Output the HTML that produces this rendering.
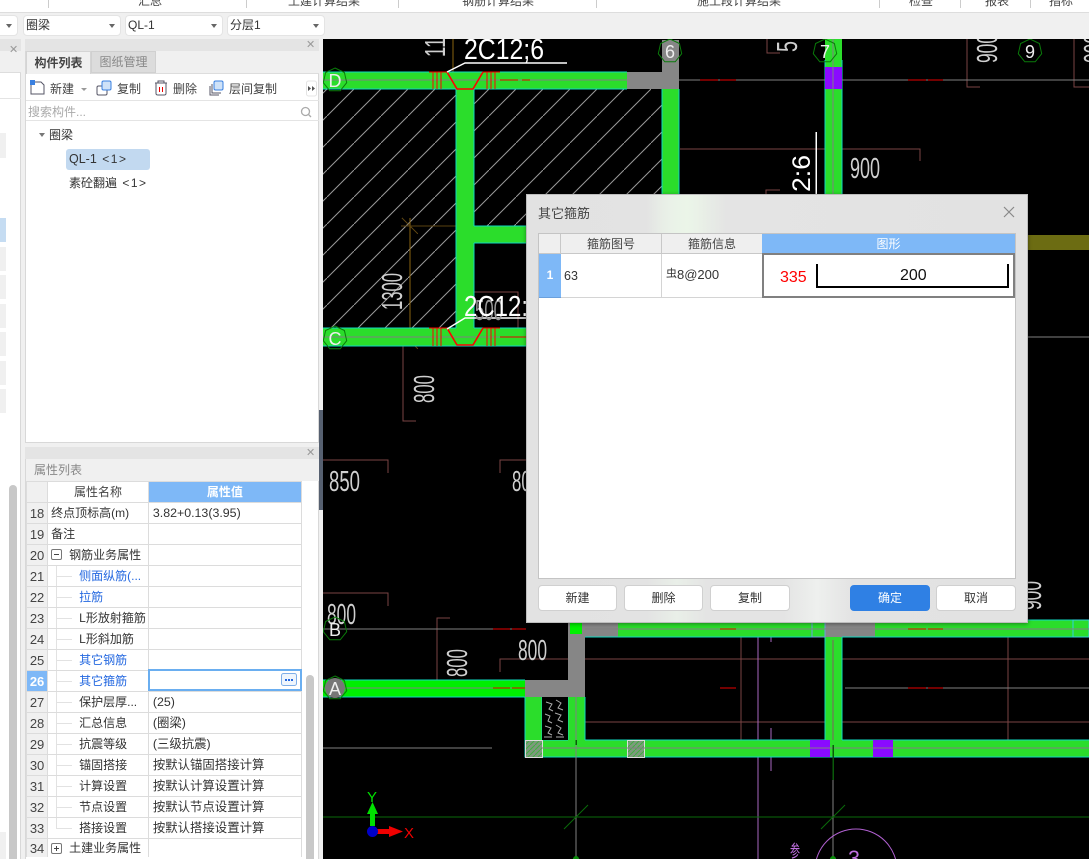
<!DOCTYPE html>
<html style="overflow:hidden;width:1089px;height:859px"><head><meta charset="utf-8"><style>
html,body{margin:0;padding:0}
body{width:1089px;height:859px;overflow:hidden;position:relative;background:#f0f0f0;font:12px/1 "Liberation Sans","Noto Sans CJK SC",sans-serif;color:#333}
.a{position:absolute}
.sel{position:absolute;top:15px;height:21px;background:#fff;border-radius:4px;border:1px solid #e4e4e4;box-sizing:border-box;line-height:19px;padding-left:2px;font-size:12px}
.sel:after{content:"";position:absolute;right:5px;top:8px;border:3px solid transparent;border-top:4px solid #666}
.top{position:absolute;top:-5px;font-size:12px;line-height:12px;white-space:nowrap;color:#444}
.sep{position:absolute;top:0;height:8px;width:1px;background:#ccc}
table{border-collapse:collapse;table-layout:fixed;position:absolute}
#pw{position:absolute;left:26px;top:481px;width:277px;height:378px;overflow:hidden}
#pt{left:0;top:0;width:276px}
#pt td{height:20px;padding:0;border:1px solid #dcdcdc;position:relative;white-space:nowrap;overflow:hidden;background:#fff;box-sizing:content-box;color:#333}
#pt tr.last td{height:18px;border-bottom:0}
#pt td:first-child{background:#f0f0f0;text-align:center;font-size:13px;color:#444}
#pt td.n{padding-left:3px}
#pt td.c{padding-left:31px;}
#pt td.v{padding-left:4px;font-size:12.4px}
#pt .b{color:#2468e0}
#pt i{position:absolute;left:8px;top:0;bottom:0;width:1px;background:#e2e2e2}
#pt i:after{content:"";position:absolute;left:0;top:10px;width:16px;height:1px;background:#e2e2e2}
.box{position:absolute;left:3px;top:4px;width:11px;height:11px;border:1px solid #777;border-radius:2px;box-sizing:border-box;background:#fff}
.box:before{content:"";position:absolute;left:2px;top:4px;width:5px;height:1px;background:#444}
.box.p:after{content:"";position:absolute;left:4px;top:2px;width:1px;height:5px;background:#444}
.btn{position:absolute;top:585px;height:26px;background:#fff;border:1px solid #d0d0d0;border-radius:4px;box-sizing:border-box;text-align:center;line-height:25px;font-size:12px;color:#333}
.tb{position:absolute;top:82px;font-size:12px;line-height:14px;color:#444;white-space:nowrap}
</style></head><body>

<!-- top strip -->
<div class="a" style="left:0;top:0;width:1089px;height:13px;box-sizing:border-box;background:#fff;border-bottom:1px solid #ddd;overflow:hidden">
<div class="sep" style="left:48px"></div><div class="sep" style="left:246px"></div><div class="sep" style="left:398px"></div><div class="sep" style="left:596px"></div><div class="sep" style="left:879px"></div><div class="sep" style="left:960px"></div><div class="sep" style="left:1030px"></div>
<span class="top" style="left:138px">汇总</span><span class="top" style="left:288px">土建计算结果</span><span class="top" style="left:462px">钢筋计算结果</span><span class="top" style="left:697px">施工段计算结果</span><span class="top" style="left:909px">检查</span><span class="top" style="left:985px">报表</span><span class="top" style="left:1049px">指标</span>
</div>
<div class="sel" style="left:-10px;width:28px"></div>
<div class="sel" style="left:23px;width:98px">圈梁</div>
<div class="sel" style="left:125px;width:98px">QL-1</div>
<div class="sel" style="left:227px;width:98px">分层1</div>

<!-- CAD -->
<svg class="a" style="left:323px;top:39px;display:block" width="766" height="820" viewBox="323 39 766 820" shape-rendering="crispEdges" xmlns="http://www.w3.org/2000/svg">
<defs>
<pattern id="h" width="27" height="27" patternUnits="userSpaceOnUse" x="3" y="8"><path d="M-1 28L28-1" stroke="#9a9a9a" stroke-width="1" shape-rendering="geometricPrecision"/></pattern>
<pattern id="g" width="5" height="5" patternUnits="userSpaceOnUse"><rect width="5" height="5" fill="#7d9a7d"/><path d="M0 5L5 0" stroke="#3fae3f" shape-rendering="geometricPrecision"/></pattern>
<polygon id="hx" points="0,-12 9.4,-7.5 11.7,2.7 5.2,10.8 -5.2,10.8 -11.7,2.7 -9.4,-7.5" fill="none" stroke="#0a7a0a" stroke-width="1" shape-rendering="geometricPrecision"/>
</defs>
<rect x="323" y="39" width="766" height="820" fill="#000"/>
<rect x="323" y="89" width="133" height="239" fill="url(#h)"/>
<rect x="474" y="89" width="188" height="137" fill="url(#h)"/>

<!-- brown / dim lines -->
<g fill="none" stroke="#7a4444" stroke-width="1">
<path d="M323 460H388V473M526 460H500V473M323 593H388V606"/>
<path d="M416 345H403V421H416M450 618H437V695H450"/>
<path d="M500 672V659H1089M576 722H1089"/>
<path d="M741 623V757H754M1008 623V755H1021"/>
<path d="M680 149H920V161M780 53H767V39M967 39V87H980M1074 39V87H1089M780 190H766V194"/>
<path d="M465 330V292H518V330"/>
</g>
<path d="M758 623V859M771 623V642M771 728V771" stroke="#a868c0" fill="none"/>
<path d="M410 218V340M453 39V72" stroke="#8a6410" fill="none"/>
<path d="M401 226H456M402 333L418 349M402 218L418 234" stroke="#5a4210" fill="none"/>

<!-- beams -->
<g fill="#2bdd2b">
<rect x="323" y="72" width="304" height="17"/>
<rect x="456" y="89" width="18" height="239"/>
<rect x="474" y="226" width="52" height="17"/>
<rect x="662" y="89" width="17" height="105"/>
<rect x="323" y="328" width="203" height="18"/>
<rect x="825" y="39" width="17" height="155"/>
<rect x="585" y="620" width="504" height="17"/>
<rect x="825" y="637" width="17" height="103"/>
<rect x="525" y="740" width="564" height="17"/>
<rect x="525" y="697" width="17" height="43"/>
<rect x="568" y="697" width="17" height="43"/>
</g>
<rect x="323" y="680" width="202" height="17" fill="#00ee00"/>
<g fill="#868686">
<path d="M627 72H662V40H679V89H627Z"/>
<path d="M525 680H568V623H585V697H525Z"/>
<rect x="585" y="623" width="33" height="14"/>
<rect x="825" y="623" width="50" height="14"/>
</g>
<g fill="none" stroke="#10d8c0" stroke-width="1">
<path d="M323 72H627M323 89H456M474 89H627M456 89V328M474 89V226M474 243V328M474 226H526M474 243H526"/>
<path d="M662 89V194M679 89V194M323 346H526M323 328H456M474 328H526"/>
<path d="M825 60V194M842 60V194M825 637V740M842 637V740M585 637H825M842 637H1089M585 620H1089"/>
<path d="M542 697V740M568 697V740M585 697V740M525 697V757H1089M542 740H568M585 740H825M842 740H1089M323 680H525M323 697H525"/>
</g>
<rect x="825" y="67" width="17" height="22" fill="#8a0aff"/>
<rect x="810" y="740" width="20" height="17" fill="#8a0aff"/>
<rect x="873" y="740" width="20" height="17" fill="#8a0aff"/>
<rect x="570" y="623" width="12" height="11" fill="#00f000"/>
<rect x="525.5" y="740.5" width="17" height="17" fill="url(#g)" stroke="#ddd"/>
<rect x="627.5" y="740.5" width="17" height="17" fill="url(#g)" stroke="#ddd"/>
<rect x="1073" y="620" width="16" height="17" fill="none" stroke="#30d0e0"/>
<rect x="812" y="620" width="13" height="17" fill="none" stroke="#6aa0e0"/>
<!-- speckle fill -->
<rect x="542" y="697" width="26" height="43" fill="#000"/>
<path d="M546 702l6 2-3 5 4 2M556 700l5 3-3 5 5 2M545 714l5 2-2 5 4 2M555 713l6 2-3 5 5 2M545 726l6 2-3 5 4 2M556 725l5 3-3 5 5 2M544 737h8M556 737h8" fill="none" stroke="#aaa" stroke-width="1" shape-rendering="geometricPrecision"/>

<!-- grey centre lines -->
<g stroke="#808080" fill="none">
<path d="M323 80H627M323 337H526M679 80H825M842 80H1089M323 629H526M323 688H525M845 688H1089M323 748H492M542 748H1089M585 629H1089"/>
<path d="M576 697V859M833 780V859M833 39V623M1028 337H1089"/>
</g>
<path d="M833 640V740" stroke="#806060"/>
<path d="M323 817H1089" stroke="#0a6a0a"/>
<path d="M564 829L588 805M821 829L845 805" stroke="#0a6a0a" shape-rendering="geometricPrecision"/>
<path d="M576 740V745M833 745V780" stroke="#0a5a0a" stroke-width="1.500"/>
<!-- red dashes -->
<path d="M500 80H518M522 80H530M500 337H526M700 80H718M720 80H736M908 80H926M928 80H943M493 629H510M512 629H526M493 688H510M512 688H525M908 688H926M928 688H943M908 629H926M928 629H943M720 629H736M720 688H736" stroke="#e80000" fill="none"/>
<!-- rebar D & C -->
<g fill="none" stroke="#ff0000" stroke-width="1.3">
<path d="M429 72H447M483 72H500M433 72V89M437 72V89M441 72V89M487 72V89M491 72V89M495 72V89"/>
<path d="M447 72L457 89H473L483 72" stroke-width="1.6" shape-rendering="geometricPrecision"/>
<path d="M429 328H447M483 328H500M433 328V346M437 328V346M441 328V346M487 328V346M491 328V346M495 328V346"/>
<path d="M447 328L457 345H473L483 328" stroke-width="1.6" shape-rendering="geometricPrecision"/>
</g>
<!-- leaders -->
<path d="M567 63H465L447 72M527 318H465L447 329" fill="none" stroke="#fff" stroke-width="1.4" shape-rendering="geometricPrecision"/>
<path d="M816 132V194" stroke="#fff" stroke-width="1.5"/>
<!-- olive bar -->
<rect x="1028" y="235" width="61" height="15" fill="#6c6c12"/>

<!-- dimension text -->
<g font-family="Liberation Sans" fill="#cfcfcf" font-size="29" shape-rendering="geometricPrecision">
<text x="329" y="491" textLength="31" lengthAdjust="spacingAndGlyphs">850</text>
<text x="512" y="491" textLength="28" lengthAdjust="spacingAndGlyphs">800</text>
<text x="327" y="624" textLength="29" lengthAdjust="spacingAndGlyphs">800</text>
<text x="518" y="660" textLength="29" lengthAdjust="spacingAndGlyphs">800</text>
<text x="850" y="178" textLength="30" lengthAdjust="spacingAndGlyphs">900</text>
<text x="475" y="320" textLength="28" lengthAdjust="spacingAndGlyphs" fill="#999">500</text>
<text transform="translate(402,310) rotate(-90)" textLength="37" lengthAdjust="spacingAndGlyphs">1300</text>
<text transform="translate(434,403) rotate(-90)" textLength="28" lengthAdjust="spacingAndGlyphs">800</text>
<text transform="translate(467,677) rotate(-90)" textLength="28" lengthAdjust="spacingAndGlyphs">800</text>
<text transform="translate(997,63) rotate(-90)" textLength="29" lengthAdjust="spacingAndGlyphs">900</text>
<text transform="translate(1104,63) rotate(-90)" textLength="29" lengthAdjust="spacingAndGlyphs">900</text>
<text transform="translate(797,52) rotate(-90)" textLength="11" lengthAdjust="spacingAndGlyphs">5</text>
<text transform="translate(445,57) rotate(-90)" textLength="30" lengthAdjust="spacingAndGlyphs">110</text>
<text transform="translate(1041,610) rotate(-90)" textLength="29" lengthAdjust="spacingAndGlyphs">900</text>
</g>
<g font-family="Liberation Sans" fill="#fff" shape-rendering="geometricPrecision">
<text x="464" y="59" font-size="29" textLength="80" lengthAdjust="spacingAndGlyphs">2C12;6</text>
<text x="464" y="316" font-size="29" textLength="64" lengthAdjust="spacingAndGlyphs">2C12:</text>
<text transform="translate(810,192) rotate(-90)" font-size="25" textLength="37" lengthAdjust="spacingAndGlyphs">2:6</text>
</g>
<!-- axis markers -->
<circle cx="335" cy="688" r="10" fill="#777" shape-rendering="geometricPrecision"/>
<use href="#hx" x="335" y="80"/><use href="#hx" x="670" y="51"/><use href="#hx" x="825" y="51"/><use href="#hx" x="1030" y="51"/><use href="#hx" x="335" y="338"/><use href="#hx" x="335" y="629"/><use href="#hx" x="335" y="688"/>
<g font-family="Liberation Sans" fill="#eee" font-size="18" text-anchor="middle">
<text x="335" y="87">D</text><text x="670" y="58">6</text><text x="825" y="58">7</text><text x="1030" y="58">9</text><text x="335" y="345">C</text><text x="335" y="636">B</text><text x="335" y="695">A</text>
</g>
<!-- UCS -->
<rect x="370" y="808" width="5" height="18" fill="#00e000"/>
<path d="M372.5 802L378 814H367Z" fill="#00e000" shape-rendering="geometricPrecision"/>
<rect x="375" y="829" width="14" height="5" fill="#f00000"/>
<path d="M403 831.500L389 826V837Z" fill="#f00000" shape-rendering="geometricPrecision"/>
<circle cx="372.500" cy="831.500" r="5.500" fill="#0000c8" shape-rendering="geometricPrecision"/>
<text x="367" y="802" font-family="Liberation Sans" font-size="15" fill="#00e000">Y</text>
<text x="404" y="838" font-family="Liberation Sans" font-size="15" fill="#f00000">X</text>
<!-- grid bubble 3 -->
<circle cx="856" cy="870" r="41" fill="none" stroke="#b060d0" shape-rendering="geometricPrecision"/>
<text x="848" y="866" font-family="Liberation Sans" font-size="22" fill="#c070e0" textLength="12" lengthAdjust="spacingAndGlyphs">3</text>
<text x="790" y="857" font-family="Liberation Sans,Noto Sans CJK SC" font-size="17" fill="#c070e0" textLength="10" lengthAdjust="spacingAndGlyphs">参</text>
<circle cx="576" cy="859" r="3" fill="#0a8a0a"/><circle cx="833" cy="859" r="3" fill="#0a8a0a"/>
</svg>
<div class="a" style="left:319px;top:410px;width:4px;height:100px;background:#566070"></div>

<!-- far left strip -->
<div class="a" style="left:0;top:39px;width:21px;height:820px;box-sizing:border-box;background:#fff;border-right:1px solid #d8d8d8">
<div class="a" style="left:0;top:0;width:21px;height:12px;background:#e4e4e4"></div>
<div class="a" style="left:0;top:12px;width:21px;height:21px;background:#f0f0f0;border-bottom:1px solid #ddd"></div>
<div class="a" style="left:0;top:33px;width:21px;height:26px;border-bottom:1px solid #e4e4e4"></div>
<div class="a" style="left:9px;top:6px;color:#999;font-size:11px;line-height:1">✕</div>
<div class="a" style="left:0;top:94px;width:6px;height:25px;background:#f0f0f0"></div>
<div class="a" style="left:0;top:179px;width:6px;height:24px;background:#c5dcf2"></div>
<div class="a" style="left:0;top:208px;width:6px;height:24px;background:#f0f0f0"></div>
<div class="a" style="left:0;top:236px;width:6px;height:24px;background:#f0f0f0"></div>
<div class="a" style="left:0;top:265px;width:6px;height:24px;background:#f0f0f0"></div>
<div class="a" style="left:0;top:293px;width:6px;height:24px;background:#f0f0f0"></div>
<div class="a" style="left:0;top:322px;width:6px;height:24px;background:#f0f0f0"></div>
<div class="a" style="left:0;top:350px;width:6px;height:24px;background:#f0f0f0"></div>
<div class="a" style="left:0;top:793px;width:6px;height:27px;background:#f0f0f0"></div>
<div class="a" style="left:9px;top:446px;width:8px;height:374px;background:#c8c8c8;border-radius:4px 4px 0 0"></div>
</div>

<!-- component list panel -->
<div class="a" style="left:25px;top:39px;width:294px;height:404px;background:#fff;border:1px solid #d8d8d8;border-top:0;box-sizing:border-box"></div>
<div class="a" style="left:25px;top:39px;width:294px;height:12px;background:#e4e4e4"></div>
<div class="a" style="left:306px;top:40px;color:#999;font-size:11px;line-height:11px">✕</div>
<div class="a" style="left:26px;top:51px;width:293px;height:23px;background:#f0f0f0;border-bottom:1px solid #ddd;box-sizing:border-box"></div>
<div class="a" style="left:26px;top:51px;width:65px;height:23px;background:#f0f0f0;border:1px solid #d4d4d4;border-bottom:0;box-sizing:border-box;text-align:center;line-height:22px;font-weight:bold;color:#444">构件列表</div>
<div class="a" style="left:91px;top:51px;width:65px;height:22px;background:#dcdcdc;border:1px solid #d0d0d0;box-sizing:border-box;text-align:center;line-height:21px;color:#888">图纸管理</div>
<div class="a" style="left:26px;top:100px;width:293px;height:1px;background:#e4e4e4"></div>
<div class="a" style="left:26px;top:120px;width:293px;height:1px;background:#e4e4e4"></div>

<svg class="a" style="left:28px;top:78px" width="290" height="20" viewBox="28 78 290 20" fill="none">
<path d="M31 82H41L44 85V94H31Z" stroke="#556"/><rect x="30" y="80" width="5" height="5" fill="#3a80e0"/>
<rect x="97" y="86" width="10" height="9" rx="1.500" stroke="#556"/><rect x="102" y="81" width="9" height="9" rx="1.500" fill="#cfe2f8" stroke="#3a80e0"/>
<path d="M155 83H167M158 83V81H164V83M156 83V93.500Q156 95 158 95H164Q166 95 166 93.500V83" stroke="#556"/><path d="M159.500 87V92M162.500 87V92" stroke="#e00"/>
<path d="M210 86V95H219M212 84V93H221" stroke="#556"/><rect x="214" y="81" width="9" height="9" rx="1.500" fill="#cfe2f8" stroke="#3a80e0"/>
<path d="M81 88h6l-3 3z" fill="#999"/>
<rect x="306.500" y="81" width="10" height="15" rx="2" fill="#fff" stroke="#e4e4e4"/>
<path d="M308 86l3 2.500-3 2.500zM312 86l3 2.500-3 2.500z" fill="#555"/>
</svg>
<div class="tb" style="left:50px">新建</div><div class="tb" style="left:117px">复制</div><div class="tb" style="left:173px">删除</div><div class="tb" style="left:229px">层间复制</div>
<div class="a" style="left:28px;top:105px;color:#aaa;line-height:14px">搜索构件...</div>
<svg class="a" style="left:300px;top:106px" width="12" height="12" fill="none" stroke="#aaa" stroke-width="1.300"><circle cx="5.500" cy="5.500" r="4"/><path d="M8.500 8.500L11 11"/></svg>
<div class="a" style="left:39px;top:133px;border:3px solid transparent;border-top:4px solid #777"></div>
<div class="a" style="left:49px;top:128px;line-height:14px;font-size:12px">圈梁</div>
<div class="a" style="left:66px;top:149px;width:84px;height:21px;background:#c2d9f0;border-radius:3px;line-height:21px;padding-left:3px;box-sizing:border-box;white-space:nowrap;font-size:12.500px">QL-1 <span style="font-size:12px;letter-spacing:1.500px;margin-left:2px">&lt;1&gt;</span></div>
<div class="a" style="left:69px;top:176px;line-height:14px;white-space:nowrap">素砼翻遍 <span style="font-size:12px;letter-spacing:1.500px;margin-left:2px">&lt;1&gt;</span></div>

<!-- property panel -->
<div class="a" style="left:25px;top:447px;width:294px;height:412px;background:#fff;border-left:1px solid #d8d8d8;border-right:1px solid #d8d8d8;box-sizing:border-box"></div>
<div class="a" style="left:25px;top:447px;width:294px;height:12px;background:#e4e4e4"></div>
<div class="a" style="left:306px;top:448px;color:#999;font-size:11px;line-height:11px">✕</div>
<div class="a" style="left:26px;top:459px;width:293px;height:22px;background:#f0f0f0;line-height:22px;padding-left:8px;box-sizing:border-box;color:#888;font-size:12px">属性列表</div>
<div id="pw"><table id="pt"><colgroup><col style="width:21px"><col style="width:100px"><col style="width:152px"></colgroup>
<tr><td></td><td style="text-align:center;color:#444">属性名称</td><td style="text-align:center;background:#7eb8f7;color:#fff;font-weight:bold">属性值</td></tr>
<tr><td>18</td><td class="n">终点顶标高(m)</td><td class="v">3.82+0.13(3.95)</td></tr>
<tr><td>19</td><td class="n">备注</td><td class="v"></td></tr>
<tr><td>20</td><td style="padding-left:21px"><span class="box"></span>钢筋业务属性</td><td></td></tr>
<tr><td>21</td><td class="c b"><i></i>侧面纵筋(...</td><td></td></tr>
<tr><td>22</td><td class="c b"><i></i>拉筋</td><td></td></tr>
<tr><td>23</td><td class="c"><i></i>L形放射箍筋</td><td></td></tr>
<tr><td>24</td><td class="c"><i></i>L形斜加筋</td><td></td></tr>
<tr><td>25</td><td class="c b"><i></i>其它钢筋</td><td></td></tr>
<tr><td style="background:#7eb8f7;color:#fff;font-weight:bold">26</td><td class="c b"><i></i>其它箍筋</td><td></td></tr>
<tr><td>27</td><td class="c"><i></i>保护层厚...</td><td class="v">(25)</td></tr>
<tr><td>28</td><td class="c"><i></i>汇总信息</td><td class="v">(圈梁)</td></tr>
<tr><td>29</td><td class="c"><i></i>抗震等级</td><td class="v">(三级抗震)</td></tr>
<tr><td>30</td><td class="c"><i></i>锚固搭接</td><td class="v">按默认锚固搭接计算</td></tr>
<tr><td>31</td><td class="c"><i></i>计算设置</td><td class="v">按默认计算设置计算</td></tr>
<tr><td>32</td><td class="c"><i></i>节点设置</td><td class="v">按默认节点设置计算</td></tr>
<tr><td>33</td><td class="c"><i style="bottom:10px"></i>搭接设置</td><td class="v">按默认搭接设置计算</td></tr>
<tr class="last"><td>34</td><td style="padding-left:21px"><span class="box p"></span>土建业务属性</td><td></td></tr>
</table></div>
<div class="a" style="left:148px;top:669px;width:154px;height:22px;border:2px solid #6aaef0;box-sizing:border-box;background:#fff"></div>
<svg class="a" style="left:281px;top:673px" width="16" height="13"><rect x=".5" y=".5" width="15" height="12" rx="2" fill="#eef5fd" stroke="#7eaee8"/><rect x="4" y="6" width="2" height="2" fill="#2468e0"/><rect x="7" y="6" width="2" height="2" fill="#2468e0"/><rect x="10" y="6" width="2" height="2" fill="#2468e0"/></svg>
<div class="a" style="left:306px;top:675px;width:8px;height:184px;background:#c8c8c8;border-radius:4px 4px 0 0"></div>

<!-- dialog -->
<div class="a" style="left:526px;top:194px;width:502px;height:429px;box-sizing:border-box;border:1px solid #bdbdbd;background:linear-gradient(90deg,#e2e2e2 0,#e3e3e3 24%,#e9efe8 30%,#e4e4e4 36%,#e2e2e2 100%);box-shadow:0 1px 4px rgba(0,0,0,.4);overflow:hidden">
<div class="a" style="left:120px;top:0;width:80px;height:60px;background:linear-gradient(90deg,rgba(235,245,232,0),#ebf5e8 50%,rgba(235,245,232,0))"></div>
<div class="a" style="left:255px;top:380px;width:70px;height:47px;background:linear-gradient(90deg,rgba(238,240,238,0),#eef0ee 50%,rgba(238,240,238,0))"></div>
</div>
<div class="a" style="left:538px;top:206px;font-size:13px;line-height:15px;color:#444">其它箍筋</div>
<svg class="a" style="left:1003px;top:206px" width="12" height="12" stroke="#888" stroke-width="1.200"><path d="M1 1L11 11M11 1L1 11"/></svg>
<div class="a" style="left:538px;top:233px;width:478px;height:346px;background:#fff;border:1px solid #c4c4c4;box-sizing:border-box"></div>
<div class="a" style="left:539px;top:234px;width:22px;height:20px;background:#efefef;border-right:1px solid #c8c8c8;border-bottom:1px solid #c8c8c8;box-sizing:border-box"></div>
<div class="a" style="left:561px;top:234px;width:101px;height:20px;background:#efefef;border-right:1px solid #c8c8c8;border-bottom:1px solid #c8c8c8;box-sizing:border-box;text-align:center;line-height:20px;color:#444">箍筋图号</div>
<div class="a" style="left:662px;top:234px;width:101px;height:20px;background:#efefef;border-right:1px solid #c8c8c8;border-bottom:1px solid #c8c8c8;box-sizing:border-box;text-align:center;line-height:20px;color:#444">箍筋信息</div>
<div class="a" style="left:762px;top:234px;width:253px;height:20px;background:#7eb8f7;text-align:center;line-height:20px;color:#fff">图形</div>
<div class="a" style="left:539px;top:254px;width:22px;height:44px;background:#7eb8f7;color:#fff;text-align:center;line-height:43px;font-weight:bold;border-bottom:1px solid #6aa0dd;box-sizing:border-box">1</div>
<div class="a" style="left:561px;top:254px;width:101px;height:44px;border-right:1px solid #d4d4d4;border-bottom:1px solid #d4d4d4;box-sizing:border-box;line-height:44px;padding-left:3px;color:#333;font-size:12.500px">63</div>
<div class="a" style="left:662px;top:254px;width:100px;height:44px;border-bottom:1px solid #d4d4d4;box-sizing:border-box;line-height:42px;color:#333;padding-left:4px;font-size:13px"><span style="font-size:11px;position:relative;top:-2px">虫</span>8@200</div>
<div class="a" style="left:762px;top:253px;width:253px;height:45px;border:2px solid #808080;box-sizing:border-box;background:#fff"></div>
<div class="a" style="left:780px;top:269px;color:#f00;font-size:16px;line-height:18px">335</div>
<div class="a" style="left:816px;top:264px;width:193px;height:24px;border:2px solid #000;border-top:0;box-sizing:border-box"></div>
<div class="a" style="left:900px;top:267px;color:#111;font-size:16px;line-height:18px">200</div>
<div class="btn" style="left:538px;width:79px">新建</div>
<div class="btn" style="left:624px;width:79px">删除</div>
<div class="btn" style="left:710px;width:80px">复制</div>
<div class="btn" style="left:850px;width:80px;background:#2f80e4;border-color:#2f80e4;color:#fff">确定</div>
<div class="btn" style="left:936px;width:80px">取消</div>
</body></html>
